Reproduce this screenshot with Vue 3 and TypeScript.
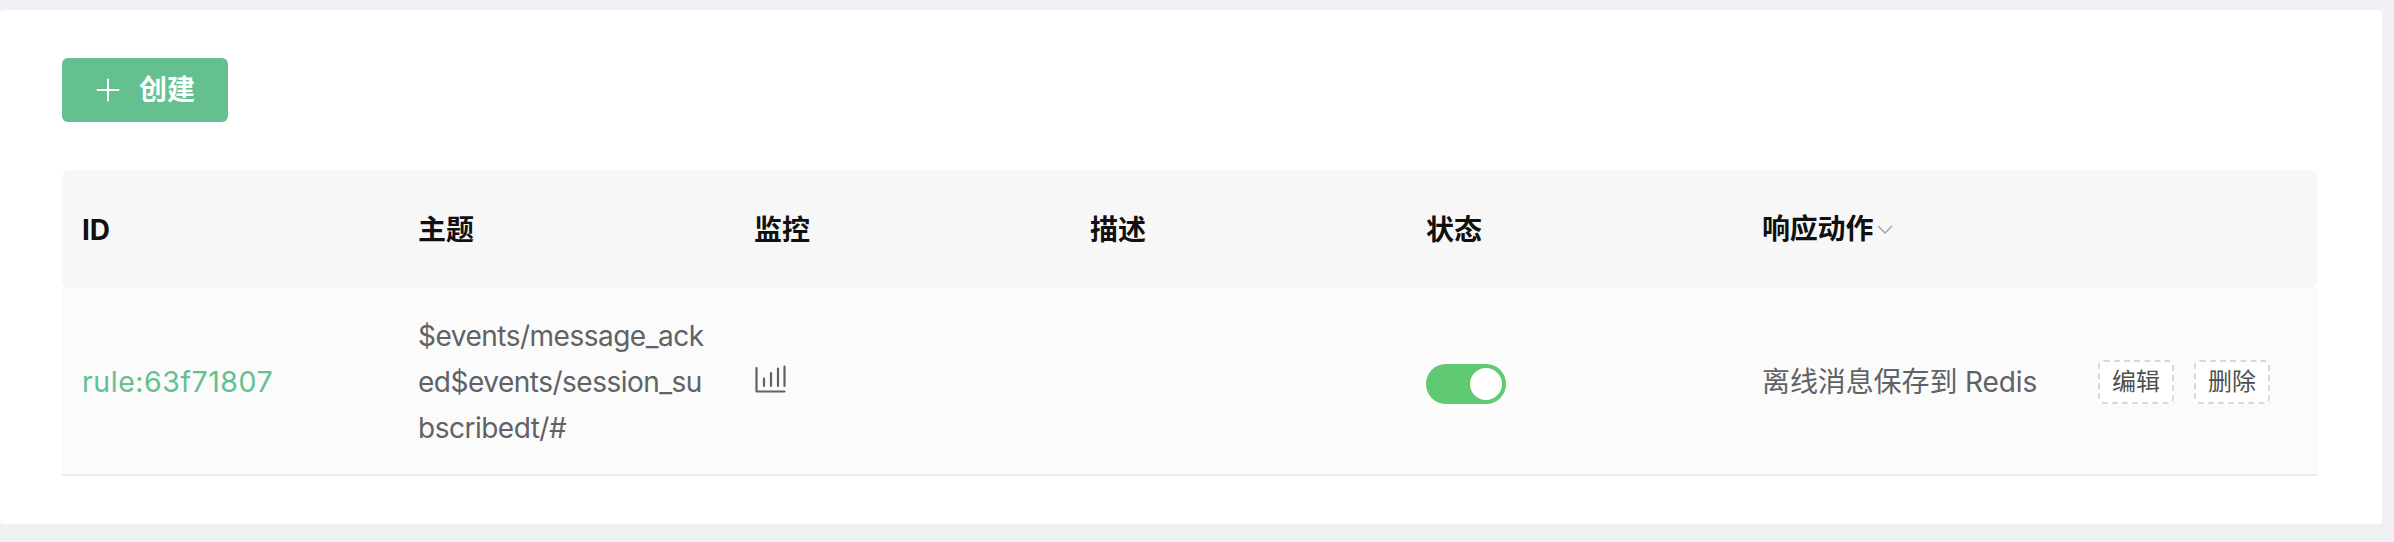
<script setup lang="ts">
interface Rule {
  id: string
  topic: string
  description: string
  enabled: boolean
  action: string
}

const columns: string[] = ['ID', '主题', '监控', '描述', '状态']
const rules: Rule[] = [
  {
    id: 'rule:63f71807',
    topic: '$events/message_acked$events/session_subscribedt/#',
    description: '',
    enabled: true,
    action: '离线消息保存到 Redis',
  },
]
</script>

<template>
  <main class="page">
    <section class="card">
      <button class="create" type="button">
        <svg class="plus" viewBox="0 0 24 24" width="24" height="24">
          <path d="M12 1.500v21M1.500 12h21" />
        </svg>
        <span class="create-label">创建</span>
      </button>

      <div class="table">
        <div class="grid head">
          <div v-for="name in columns" :key="name" class="cell">{{ name }}</div>
          <div class="cell sortable">
            <span>响应动作</span>
            <svg class="chevron" viewBox="0 0 16 10" width="16" height="10">
              <path d="M1.5 1.5L8 8l6.500-6.500" />
            </svg>
          </div>
        </div>
        <div v-for="rule in rules" :key="rule.id" class="grid row">
          <div class="cell"><a class="link">{{ rule.id }}</a></div>
          <div class="cell topic">{{ rule.topic }}</div>
          <div class="cell">
            <svg class="chart" viewBox="0 0 32 28" width="32" height="28">
              <path d="M2.500 3v23.500h28M10 13.500v7.500M17 8v13M24 3.500v17.500M30.500 1.500v19.500" />
            </svg>
          </div>
          <div class="cell">{{ rule.description }}</div>
          <div class="cell switch-cell">
            <span class="switch" :class="{ on: rule.enabled }"><i class="knob"></i></span>
          </div>
          <div class="cell action">{{ rule.action }}</div>
          <div class="ops">
            <button class="op" type="button">编辑</button>
            <button class="op" type="button">删除</button>
          </div>
        </div>
      </div>
    </section>
  </main>
</template>

<style>
body {
  margin: 0;
  background: #f0f1f5;
}
</style>

<style scoped>
.page {
  box-sizing: border-box;
  height: 542px;
  padding: 10px 12px 18px 0;
  background: #f0f1f5;
  font-family: Inter, "Noto Sans CJK SC", sans-serif;
  font-size: 28px;
  color: #606266;
}
.card {
  box-sizing: border-box;
  height: 514px;
  padding: 48px 64px 48px 62px;
  border-radius: 4px;
  background: #fff;
}
button {
  margin: 0;
  font-family: inherit;
}
.create {
  display: flex;
  align-items: center;
  box-sizing: border-box;
  width: 166px;
  height: 64px;
  padding: 0 0 0 34px;
  border: 0;
  border-radius: 6px;
  background: #64c08e;
  color: #fff;
  font-size: 28px;
  font-weight: 600;
}
.create-label {
  margin-left: 19px;
  line-height: 40px;
  white-space: nowrap;
}
.plus,
.chevron,
.chart {
  display: block;
  flex: none;
  fill: none;
  stroke: currentColor;
  stroke-width: 2;
  stroke-linecap: round;
  stroke-linejoin: round;
}
.table {
  margin-top: 48px;
}
.grid {
  display: grid;
  grid-template-columns: repeat(6, 336px) 240px;
  align-items: center;
}
.head {
  height: 118px;
  border-radius: 8px;
  background: #f7f7f7;
  color: #101010;
  font-weight: 700;
}
.cell {
  padding: 1px 20px 0;
  line-height: 46px;
}
.sortable {
  display: flex;
  align-items: center;
  padding-top: 0;
  padding-bottom: 1px;
}
.sortable span {
  letter-spacing: -0.2px;
}
.chevron {
  margin: 3px 0 0 4px;
  color: #a6a6a6;
  stroke-width: 1.5;
}
.row {
  height: 186px;
  border-bottom: 2px solid #ebeef5;
  background: #fbfbfb;
}
.link {
  color: #64c08e;
  font-size: 28.5px;
  letter-spacing: 0.55px;
}
.topic {
  word-break: break-all;
  letter-spacing: -0.5px;
}
.chart {
  margin-top: -5px;
  stroke-width: 2.2;
}
.switch-cell {
  padding-top: 6px;
}
.switch {
  display: flex;
  box-sizing: border-box;
  width: 80px;
  height: 40px;
  padding: 4px;
  border-radius: 20px;
  background: #c8c9cc;
}
.switch.on {
  justify-content: flex-end;
  background: #60ca73;
}
.knob {
  width: 32px;
  height: 32px;
  border-radius: 50%;
  background: #fff;
}
.action {
  letter-spacing: -0.1px;
  white-space: nowrap;
}
.ops {
  display: flex;
  gap: 20px;
  padding-left: 20px;
}
.op {
  display: flex;
  align-items: center;
  justify-content: center;
  box-sizing: border-box;
  width: 76px;
  height: 44px;
  padding: 0;
  margin-top: 2px;
  border: 2px dashed #d8d8d8;
  border-radius: 6px;
  background: #fff;
  color: #505050;
  font-size: 24px;
  line-height: 36px;
}
</style>
